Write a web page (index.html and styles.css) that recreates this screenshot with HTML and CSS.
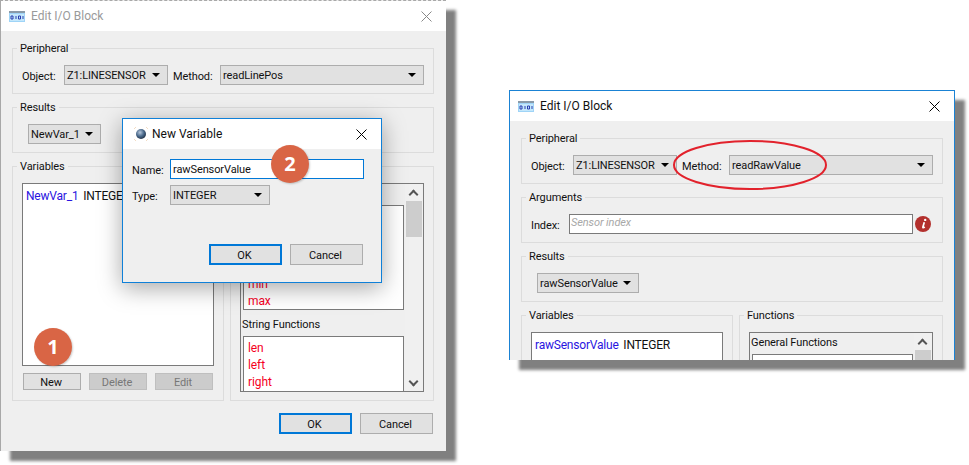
FILE: index.html
```html
<!DOCTYPE html>
<html lang="en">
<head>
<meta charset="utf-8">
<title>Edit I/O Block</title>
<link rel="stylesheet" href="styles.css">
</head>
<body>
<svg class="defs" width="0" height="0" aria-hidden="true">
  <symbol id="io" viewBox="0 0 16 11">
    <rect x="0" y="0" width="16" height="11" fill="#d6e6f5"/>
    <rect x="0" y="0" width="16" height="2" fill="#8a9aa8"/>
    <rect x="0" y="2" width="16" height="9" fill="#9fd4f7"/>
    <rect x="1" y="3" width="14" height="7" fill="#c4e7fb"/>
    <path d="M2 5h2v3H2zM7 5v3M9.500 5h2v3h-2zM14 5v3" fill="none" stroke="#2a3fb0" stroke-width="1"/>
  </symbol>
  <symbol id="close" viewBox="0 0 11 11">
    <path d="M.5.500l10 10M10.500.500l-10 10" fill="none" stroke="currentColor" stroke-width="1"/>
  </symbol>
</svg>

<section class="window win-main">
  <header class="titlebar faded">
    <svg class="io-icon"><use href="#io"/></svg>
    <span class="title">Edit I/O Block</span>
    <svg class="close"><use href="#close"/></svg>
  </header>
  <div class="body">
    <fieldset class="group">
      <legend>Peripheral</legend>
      <div class="row">
        <span class="label obj">Object:</span>
        <div class="select sel-object">Z1:LINESENSOR</div>
        <span class="label meth">Method:</span>
        <div class="select sel-method">readLinePos</div>
      </div>
    </fieldset>
    <fieldset class="group">
      <legend>Results</legend>
      <div class="row indent">
        <div class="select sel-newvar">NewVar_1</div>
      </div>
    </fieldset>
    <div class="columns">
      <fieldset class="group col-vars">
        <legend>Variables</legend>
        <div class="varlist tall"><span class="vname">NewVar_1</span> INTEGER</div>
        <div class="btnrow">
          <div class="btn small">New</div>
          <div class="btn small disabled">Delete</div>
          <div class="btn small disabled">Edit</div>
        </div>
      </fieldset>
      <fieldset class="group col-funcs">
        <legend>Functions</legend>
        <div class="funcbox tall-funcs">
          <div class="funcmain">
            <div class="funclabel">General Functions</div>
            <div class="fnlist fn-general">
              <div class="fn">min</div>
              <div class="fn">max</div>
            </div>
            <div class="funclabel second">String Functions</div>
            <div class="fnlist fn-string">
              <div class="fn">len</div>
              <div class="fn">left</div>
              <div class="fn">right</div>
            </div>
          </div>
          <div class="scroll">
            <span class="arrow up"></span>
            <span class="thumb"></span>
            <span class="arrow down"></span>
          </div>
        </div>
      </fieldset>
    </div>
    <div class="actions">
      <div class="btn big default">OK</div>
      <div class="btn big">Cancel</div>
    </div>
  </div>
</section>

<section class="dialog">
  <header class="dialog-title">
    <svg class="globe" viewBox="0 0 16 16" aria-hidden="true">
      <defs>
        <radialGradient id="g" cx=".4" cy=".35" r=".7">
          <stop offset="0" stop-color="#b8c8dc"/>
          <stop offset=".55" stop-color="#4a6a8c"/>
          <stop offset="1" stop-color="#1e2c40"/>
        </radialGradient>
      </defs>
      <circle cx="8" cy="8" r="5" fill="url(#g)"/>
      <path d="M1 3l2-2M15 3l-2-2M1 13l2 2M15 13l-2 2" stroke="#f2dcc4" stroke-width="1" fill="none"/>
    </svg>
    <span class="title dark">New Variable</span>
    <svg class="close dark-x"><use href="#close"/></svg>
  </header>
  <div class="dialog-body">
    <div class="form-row">
      <span class="form-label">Name:</span>
      <div class="input focused">rawSensorValue</div>
    </div>
    <div class="form-row type-row">
      <span class="form-label">Type:</span>
      <div class="select sel-type">INTEGER</div>
    </div>
    <div class="dialog-actions">
      <div class="btn big default">OK</div>
      <div class="btn big">Cancel</div>
    </div>
  </div>
</section>

<section class="window win-second">
  <header class="titlebar">
    <svg class="io-icon"><use href="#io"/></svg>
    <span class="title dark">Edit I/O Block</span>
    <svg class="close dark-x"><use href="#close"/></svg>
  </header>
  <div class="body">
    <fieldset class="group">
      <legend>Peripheral</legend>
      <div class="row">
        <span class="label obj">Object:</span>
        <div class="select sel-object">Z1:LINESENSOR</div>
        <span class="label meth">Method:</span>
        <div class="select sel-method">readRawValue</div>
      </div>
    </fieldset>
    <fieldset class="group">
      <legend>Arguments</legend>
      <div class="row">
        <span class="label idx">Index:</span>
        <div class="input arg">Sensor index</div>
        <svg class="info" viewBox="0 0 16 16" aria-hidden="true">
          <circle cx="8" cy="8" r="8" fill="#b3302d"/>
          <path d="M9.300 6.300L7.900 11c-.2.700.6.900 1.800-.2" fill="none" stroke="#fff" stroke-width="1.700"/>
          <circle cx="10.200" cy="3.900" r="1.200" fill="#fff"/>
        </svg>
      </div>
    </fieldset>
    <fieldset class="group">
      <legend>Results</legend>
      <div class="row indent">
        <div class="select sel-raw">rawSensorValue</div>
      </div>
    </fieldset>
    <div class="columns">
      <fieldset class="group col-vars">
        <legend>Variables</legend>
        <div class="varlist tall"><span class="vname">rawSensorValue</span> INTEGER</div>
      </fieldset>
      <fieldset class="group col-funcs">
        <legend>Functions</legend>
        <div class="funcbox tall-funcs">
          <div class="funcmain">
            <div class="funclabel">General Functions</div>
            <div class="fnlist fn-general"></div>
          </div>
          <div class="scroll">
            <span class="arrow up"></span>
            <span class="thumb"></span>
          </div>
        </div>
      </fieldset>
    </div>
  </div>
  </section>

<svg class="ellipse" width="160" height="54" viewBox="0 0 160 54" aria-hidden="true">
  <ellipse cx="79" cy="27" rx="76" ry="24" fill="none" stroke="#e2222c" stroke-width="2"/>
</svg>
<div class="badge badge-1">1</div>
<div class="badge badge-2">2</div>
</body>
</html>
```
FILE: styles.css
```css
* { box-sizing: border-box; }
html, body { margin: 0; padding: 0; }
body {
  position: relative;
  width: 969px;
  height: 465px;
  overflow: hidden;
  background: #fff;
  font-family: "Roboto", "Open Sans", sans-serif;
  font-size: 11px;
  letter-spacing: -.1px;
  color: #111;
}
.defs { position: absolute; }

/* windows on the canvas */
.window {
  position: absolute;
  width: 446px;
  background: #efefef;
  box-shadow: 10px 10px 3px #808080;
}
.win-main {
  left: 0; top: 0; height: 451px;
  border-top: 1px dashed #a8a8a8;
  border-left: 1px solid #a8a8a8;
}
.win-second {
  left: 509px; top: 90px; height: 270px;
  overflow: hidden;
  border-top: 1px solid #1a82d4;
  border-left: 1px solid #1a82d4;
  border-right: 1px solid #1a82d4;
}
.titlebar {
  display: flex;
  align-items: center;
  height: 30px;
  padding: 0 14px 0 8px;
  background: #fff;
}
.io-icon { width: 16px; height: 11px; margin-right: 6px; flex: none; }
.title { font-size: 12px; letter-spacing: 0; color: #9a9a9a; flex: 1; }
.title.dark { color: #111; }
.close { width: 11px; height: 11px; color: #888; flex: none; }
.dark-x { color: #000; }

.body { padding: 10px 12px 0 11px; }
.win-second .body { padding-right: 11px; }

.group {
  margin: 0 0 6px;
  padding: 10px 9px 8px 9px;
  min-width: 0;
  border: 1px solid #dcdcdc;
}
.group legend {
  margin-left: -5px;
  padding: 1px 3px 0;
  line-height: 13px;
}
.row { display: flex; align-items: center; height: 20px; }
.indent { padding-left: 6px; }
.label { white-space: nowrap; padding-top: 2px; }
.obj { width: 42px; }
.meth { width: 47px; margin-left: 5px; }
.idx { width: 38px; }

.select {
  position: relative;
  height: 20px;
  line-height: 20px;
  padding-left: 2px;
  background: #e1e1e1;
  border: 1px solid #adadad;
  white-space: nowrap;
}
.select::after {
  content: "";
  position: absolute;
  right: 7px; top: 7px;
  border-left: 4px solid transparent;
  border-right: 4px solid transparent;
  border-top: 4px solid #000;
}
.sel-object { width: 104px; }
.sel-method { width: 204px; }
.sel-newvar { width: 73px; }
.sel-raw { width: 102px; }
.sel-type { width: 100px; }

.input {
  height: 20px;
  line-height: 20px;
  padding-left: 2px;
  background: #fff;
  border: 1px solid #7a7a7a;
}
.input.focused { width: 194px; border-color: #0078d7; }
.input.arg {
  width: 344px;
  padding-left: 1px;
  color: #a8a8a8;
  font-style: italic;
  line-height: 16px;
}
.info { width: 16px; height: 16px; margin-left: 2px; flex: none; }

.columns { display: flex; gap: 6px; }
.columns .group { margin-bottom: 0; }
.col-vars { width: 212px; flex: none; }
.col-funcs { width: 204px; flex: none; }

.varlist {
  width: 192px;
  padding: 4px 3px;
  line-height: 16px;
  font-size: 12px;
  letter-spacing: -.2px;
  background: #fff;
  border: 1px solid #7a7a7a;
  white-space: nowrap;
}
.vname { color: #2a14e0; margin-right: 2px; }
.tall { height: 183px; }
.btnrow { display: flex; gap: 8px; padding: 7px 1px 0; }

.btn {
  display: flex;
  align-items: center;
  justify-content: center;
  padding: 2px 2px 0 0;
  background: #e1e1e1;
  border: 1px solid #adadad;
}
.btn.small { width: 58px; height: 17px; }
.btn.big { width: 73px; height: 21px; }
.btn.disabled { background: #cccccc; border-color: #bfbfbf; color: #777; }
.btn.default { border: 2px solid #0078d7; }

.funcbox {
  display: flex;
  height: 209px;
  background: #efefef;
  border: 1px solid #7a7a7a;
  overflow: hidden;
}
.funcmain { flex: 1; min-width: 0; padding: 2px 1px 0; }
.funclabel { line-height: 16px; }
.fnlist {
  width: 161px;
  margin-left: 1px;
  padding: 3px 4px;
  background: #fff;
  border: 1px solid #7a7a7a;
}
.fn-general {
  height: 105px;
  margin-top: 3px;
  padding-top: 70px;
}
.fn-string { height: 60px; margin-top: 3px; }
.second { margin-top: 7px; }
.fn { color: #f5001e; font-size: 12px; line-height: 17px; }

.scroll {
  position: relative;
  width: 18px;
  flex: none;
  background: #f0f0f0;
}
.thumb {
  position: absolute;
  left: 1px; top: 17px;
  width: 16px; height: 36px;
  background: #cdcdcd;
}
.arrow {
  position: absolute;
  left: 5px;
  width: 7px; height: 7px;
  border-left: 2px solid #555;
  border-top: 2px solid #555;
}
.arrow.up { top: 7px; transform: rotate(45deg); }
.arrow.down { bottom: 6px; transform: rotate(225deg); }

.actions {
  display: flex;
  justify-content: flex-end;
  gap: 8px;
  padding: 12px 1px 0 0;
}

/* dialog over the main window */
.dialog {
  position: absolute;
  left: 122px; top: 118px;
  width: 260px; height: 165px;
  background: #efefef;
  border: 1px solid #0f80d8;
  box-shadow: 0 5px 22px rgba(0, 0, 0, .35);
}
.dialog-title {
  display: flex;
  align-items: center;
  height: 30px;
  padding: 0 14px 0 10px;
  background: #fff;
}
.globe { width: 16px; height: 16px; margin-right: 3px; flex: none; }
.dialog-body { padding: 10px 17px 0 9px; }
.form-row { display: flex; align-items: center; }
.form-label { width: 38px; flex: none; padding-top: 2px; }
.type-row { margin-top: 6px; }
.dialog-actions {
  display: flex;
  justify-content: flex-end;
  gap: 8px;
  margin: 39px 1px 0 0;
}

/* annotations */
.ellipse { position: absolute; left: 671px; top: 138px; }
.badge {
  position: absolute;
  width: 38px; height: 38px;
  border-radius: 50%;
  background: #d96545;
  color: #fff;
  font-family: "Open Sans", sans-serif;
  font-weight: 700;
  font-size: 20px;
  line-height: 38px;
  text-align: center;
  box-shadow: 1px 1px 2px rgba(0, 0, 0, .2);
}
.badge-1 { left: 34px; top: 328px; }
.badge-2 { left: 271px; top: 145px; }
```
